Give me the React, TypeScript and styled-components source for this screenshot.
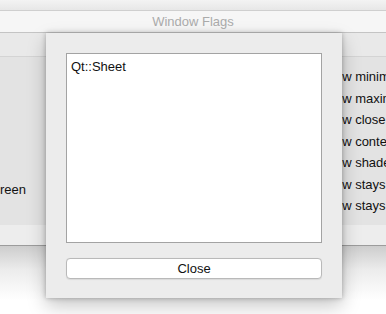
import React from "react";
import styled, { createGlobalStyle } from "styled-components";

const Global = createGlobalStyle`
  html, body { margin: 0; padding: 0; background: #ffffff; }
  body { font-family: "Liberation Sans", Arial, sans-serif; font-size: 13px; color: #111; }
  #root { width: 386px; height: 314px; overflow: hidden; position: relative; }
`;

const Stage = styled.div`
  position: relative;
  width: 386px;
  height: 314px;
  overflow: hidden;
  background: #ffffff;
`;

const Window = styled.div`
  display: flex;
  flex-direction: column;
`;

const TopStrip = styled.div`
  height: 10px;
  background: linear-gradient(#f3f3f3, #e7e7e7);
  border-bottom: 1px solid #cfcfcf;
`;

const TitleBar = styled.div`
  height: 21px;
  background: #f6f6f6;
  border-bottom: 1px solid #c4c4c4;
  display: flex;
  align-items: center;
  justify-content: center;
  color: #ababab;
  font-size: 13px;
`;

const Toolbar = styled.div`
  height: 23px;
  background: #e9e9e9;
  border-bottom: 1px solid #d4d4d4;
`;

const Group = styled.div`
  height: 168px;
  background: #e3e3e3;
  display: flex;
  justify-content: space-between;
`;

const LeftColumn = styled.div`
  display: flex;
  flex-direction: column;
  justify-content: flex-end;
  padding-bottom: 28px;
  margin-left: -55px;
`;

const RightColumn = styled.div`
  display: flex;
  flex-direction: column;
  gap: 6px;
  padding-top: 12px;
  width: 67px;
  white-space: nowrap;
  overflow: hidden;
`;

const Label = styled.div`
  height: 15.5px;
  line-height: 15px;
  white-space: nowrap;
  color: #111;
`;

const Footer = styled.div`
  height: 20px;
  background: #ededed;
  border-bottom: 1px solid #9c9c9c;
`;

const ShadowArea = styled.div`
  height: 68px;
  background: linear-gradient(#cdcdcd, #ececec 35%, #ffffff 80%);
`;

const Sheet = styled.div`
  position: absolute;
  left: 46px;
  top: 33px;
  width: 296px;
  height: 265px;
  box-sizing: border-box;
  background: #ececec;
  padding: 20px 20px 19px 20px;
  display: flex;
  flex-direction: column;
  gap: 15px;
  box-shadow: 0 0 5px rgba(0, 0, 0, 0.28), 0 8px 18px rgba(0, 0, 0, 0.22);
`;

const TextBox = styled.div`
  flex: 1;
  background: #ffffff;
  border: 1px solid #a3a3a3;
  padding: 5px 4px;
  color: #111;
  line-height: 15px;
`;

const Button = styled.button`
  height: 21px;
  background: #ffffff;
  border: 1px solid #b9b9b9;
  border-radius: 4px;
  font-family: "Liberation Sans", Arial, sans-serif;
  font-size: 13px;
  color: #111;
  padding: 0;
  box-shadow: 0 0.5px 1px rgba(0, 0, 0, 0.08);
`;

const rightItems = [
  "Show minimize button",
  "Show maximize button",
  "Show close button",
  "Show context help button",
  "Show shade button",
  "Show stays on top",
  "Show stays on bottom",
];

export default function App() {
  return (
    <Stage>
      <Global />
      <Window>
        <TopStrip />
        <TitleBar>Window Flags</TitleBar>
        <Toolbar />
        <Group>
          <LeftColumn>
            <Label>SplashScreen</Label>
          </LeftColumn>
          <RightColumn>
            {rightItems.map((t, i) => (
              <Label key={i}>{t}</Label>
            ))}
          </RightColumn>
        </Group>
        <Footer />
        <ShadowArea />
      </Window>
      <Sheet>
        <TextBox>Qt::Sheet</TextBox>
        <Button>Close</Button>
      </Sheet>
    </Stage>
  );
}
